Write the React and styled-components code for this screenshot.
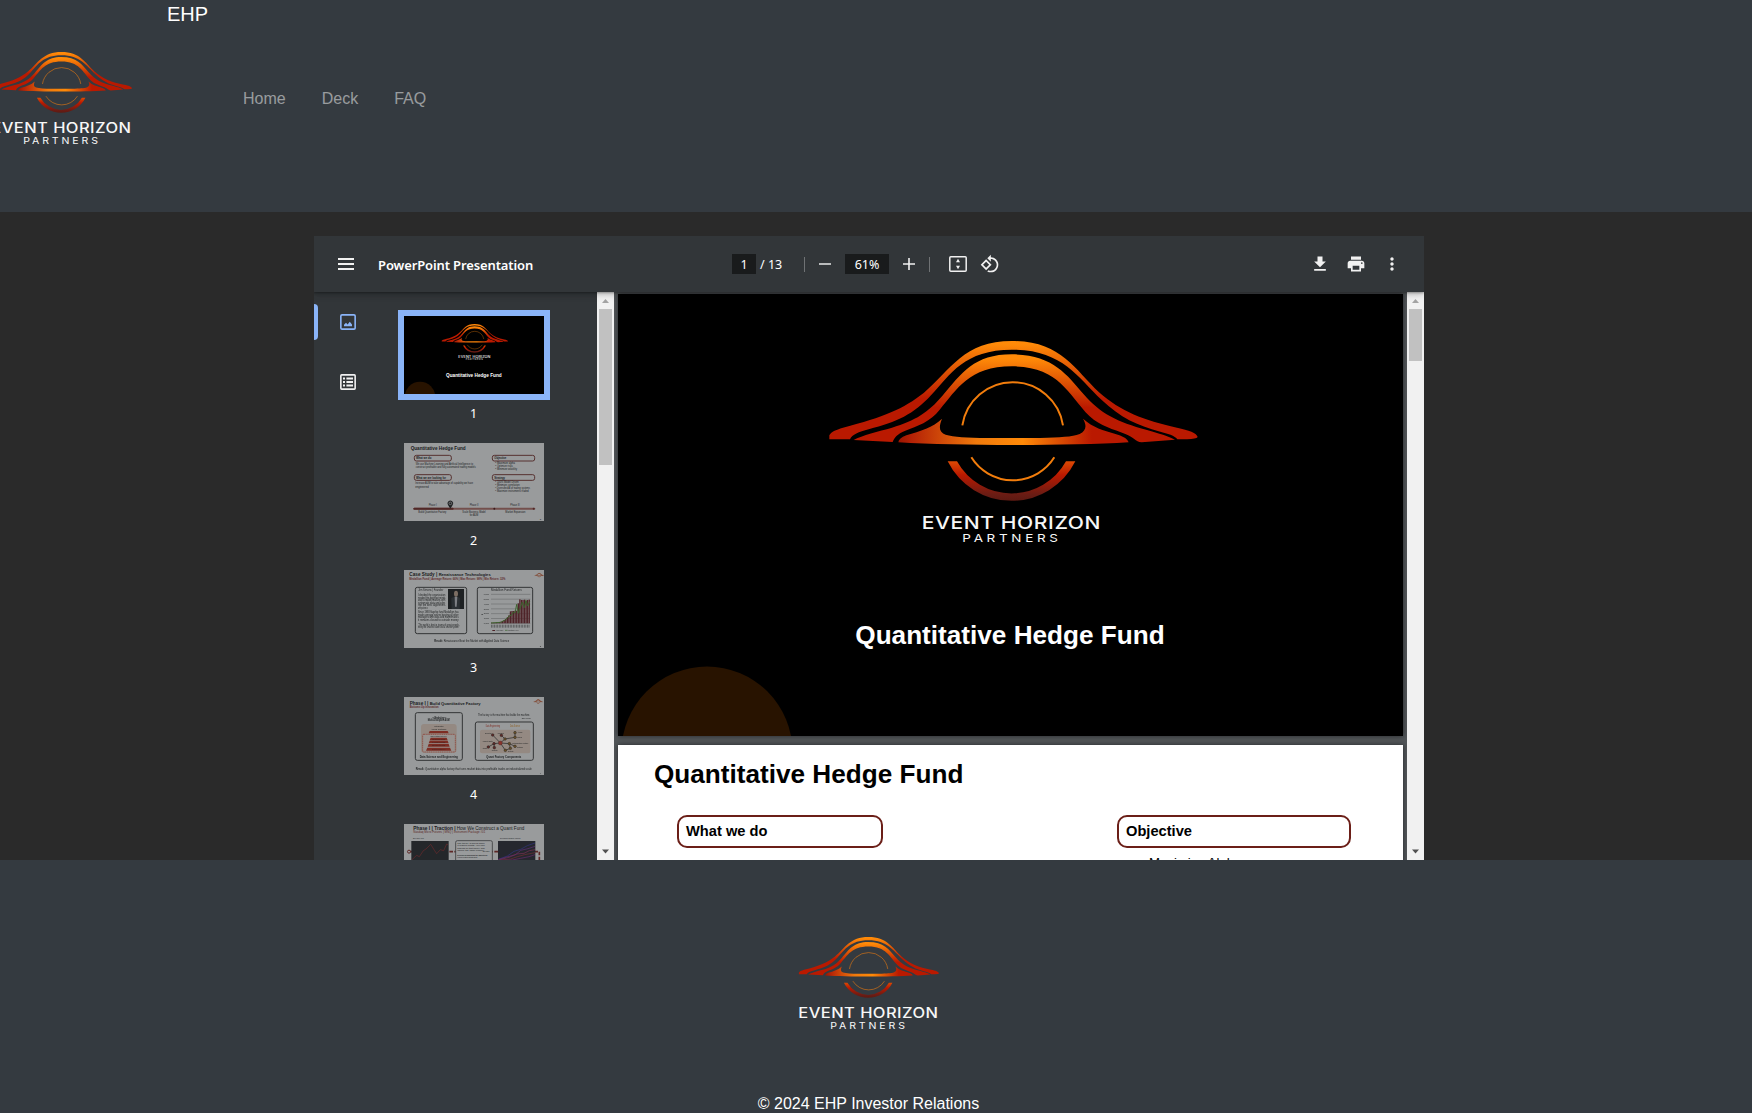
import React from "react";
import styled, { createGlobalStyle, css } from "styled-components";

const GlobalStyle = createGlobalStyle`
  * { box-sizing: border-box; }
  html, body { margin: 0; height: 100%; overflow: hidden; }
  body {
    background: #2a2a2a;
    color: #fff;
    font: 16px/24px "Liberation Sans", Arial, sans-serif;
  }
`;

const Page = styled.div`
  display: flex;
  flex-direction: column;
  height: 1113px;
  overflow: hidden;
`;

/* ---------- site header ---------- */

const Header = styled.header`
  display: flex;
  height: 212px;
  flex: none;
  background: #343a40;
`;

const HeaderLogo = styled.div`
  width: 167px;
  padding-top: 51px;
  overflow: hidden;
  svg { margin-left: -9px; }
`;

const Brand = styled.a`
  width: 76px;
  font-size: 20px;
  line-height: 28px;
`;

const Nav = styled.nav`
  display: flex;
  align-items: flex-start;
  gap: 36px;
  padding-top: 87px;
`;

const NavLink = styled.a`
  color: rgba(255, 255, 255, 0.5);
`;

/* ---------- viewer ---------- */

const Main = styled.main`
  height: 648px;
  flex: none;
  width: 1738px;
  padding-top: 24px;
  display: flex;
  justify-content: center;
`;

const Viewer = styled.section`
  width: 1110px;
  display: flex;
  flex-direction: column;
  overflow: hidden;
  font-family: "Noto Sans", "Open Sans", sans-serif;
`;

const Toolbar = styled.div`
  position: relative;
  z-index: 2;
  height: 56px;
  flex: none;
  display: grid;
  grid-template-columns: 418px 1fr 121px;
  align-items: center;
  background: #323639;
  box-shadow: 0 -2px 8px rgba(0, 0, 0, 0.09), 0 4px 8px rgba(0, 0, 0, 0.06),
    0 1px 2px rgba(0, 0, 0, 0.3), 0 2px 6px rgba(0, 0, 0, 0.15);
  color: #f1f1f1;
`;

const ToolStart = styled.div`
  display: flex;
  align-items: center;
  padding-left: 24px;
  gap: 24px;
  svg { display: block; }
`;

const DocTitle = styled.span`
  font-size: 13px;
  font-weight: 600;
  line-height: 20px;
  letter-spacing: -0.12px;
  padding-top: 1px;
  white-space: nowrap;
  color: #fff;
`;

const ToolCenter = styled.div`
  display: flex;
  align-items: center;
  font-size: 13px;
  line-height: 20px;
  svg { display: block; }
`;

const Field = styled.span`
  width: ${(p) => p.$w}px;
  height: 20px;
  background: #191b1c;
  color: #fff;
  font-size: 12.5px;
  line-height: 21px;
  text-align: center;
`;

const PageTotal = styled.span`
  width: 48px;
  padding: 1px 0 0 4px;
  font-size: 12.5px;
  color: #fff;
`;

const Divider = styled.span`
  width: 1px;
  height: 15px;
  background: #6f7274;
`;

const IconCell = styled.span`
  flex: none;
  width: ${(p) => p.$w}px;
  display: flex;
  justify-content: center;
  color: ${(p) => p.$color || "#f1f1f1"};
  svg { flex: none; }
`;

const ToolEnd = styled.div`
  display: flex;
  svg { display: block; }
`;

const ViewerBody = styled.div`
  flex: 1;
  min-height: 0;
  display: flex;
  overflow: hidden;
`;

const Sidebar = styled.aside`
  width: 283px;
  display: flex;
  background: #323639;
`;

const ModeTabs = styled.div`
  width: 68px;
  padding-top: 12px;
  display: flex;
  flex-direction: column;
  gap: 24px;
`;

const ModeTab = styled.div`
  height: 36px;
  display: flex;
  align-items: center;
  gap: 22px;
  color: #f1f1f1;
  &::before {
    content: "";
    width: 4px;
    height: 100%;
    border-radius: 0 4px 4px 0;
  }
  ${(p) =>
    p.$active &&
    css`
      color: #8ab4f8;
      &::before { background: #8ab4f8; }
    `}
  svg { display: block; }
`;

const Thumbs = styled.div`
  flex: 1;
  padding: 24px 0 0 22px;
  overflow: hidden;
`;

const Thumb = styled.figure`
  margin: 0;
  width: 140px;
  height: 127px;
  display: flex;
  flex-direction: column;
`;

const ThumbFrame = styled.div`
  height: 78px;
  box-shadow: ${(p) => (p.$selected ? "0 0 0 6px #8ab4f8" : "none")};
  svg {
    display: block;
    opacity: ${(p) => (p.$selected ? 1 : 0.5)};
  }
`;

const ThumbLabel = styled.figcaption`
  padding: 10px 1px 0 0;
  text-align: center;
  font-size: 12.5px;
  line-height: 20px;
  color: #fff;
`;

const ScrollTrack = styled.div`
  width: 17px;
  flex: none;
  background: #f1f1f1;
  display: flex;
  flex-direction: column;
  justify-content: space-between;
`;

const ScrollThumb = styled.div`
  width: 13px;
  height: ${(p) => p.$h}px;
  margin: 0 2px auto;
  background: #c1c1c1;
`;

const Pages = styled.div`
  flex: 1;
  padding: 2px 4px 0;
  background: #525659;
  overflow: hidden;
  display: flex;
  flex-direction: column;
  gap: 9px;
`;

const Slide = styled.article`
  width: 785px;
  height: 442px;
  flex: none;
  box-shadow: 0 0 5px rgba(0, 0, 0, 0.55);
  font-family: "Liberation Sans", Arial, sans-serif;
`;

const CoverSlide = styled(Slide)`
  position: relative;
  background: #000;
  display: flex;
  flex-direction: column;
  align-items: center;
  padding-top: 45px;
`;

const CoverLogo = styled.svg`
  display: block;
  margin-left: 4px;
`;

const CoverTitle = styled.h1`
  margin: 71px 1px 0 0;
  font-size: 26.15px;
  line-height: 36px;
  font-weight: 700;
  white-space: nowrap;
`;

const Planet = styled.svg`
  position: absolute;
  left: 0;
  bottom: 0;
`;

const OverviewSlide = styled(Slide)`
  background: #fff;
  color: #000;
  padding: 11px 52px 0 36px;
`;

const SlideTitle = styled.h2`
  margin: 0;
  font-size: 26.15px;
  line-height: 36px;
  font-weight: 700;
`;

const Columns = styled.div`
  display: flex;
  justify-content: space-between;
  padding: 23px 0 0 23px;
`;

const Column = styled.div`
  width: ${(p) => p.$w}px;
`;

const Heading = styled.h3`
  margin: 0;
  height: 33px;
  padding: 0 7px;
  border: 2px solid #6b1f18;
  border-radius: 10px;
  font-size: 14.67px;
  line-height: 29px;
  font-weight: 700;
`;

const Points = styled.ul`
  margin: 7px 0 0;
  padding: 0 0 0 32px;
  list-style: none;
  font-size: 13.2px;
  line-height: 15px;
`;

/* ---------- footer ---------- */

const Footer = styled.footer`
  flex: 1;
  display: flex;
  flex-direction: column;
  align-items: center;
  justify-content: space-between;
  padding: 76px 15px 0 0;
  background: #343a40;
  svg { display: block; }
`;

const Copyright = styled.p`
  margin: 0;
  height: 21px;
`;

/* ---------- drawings ---------- */

const MARK = {
  outer:
    "M87 357V345C92 334 106 329 128 322C250 291 310 265 370 218C452 148 490 62 635 62C782 62 822 146 896 216C962 274 1030 300 1130 322C1165 329 1190 338 1192 350Q1188 356 1160 357H1131C1125 346 1100 339 1080 334C1010 316 960 292 905 240C830 168 785 88 635 88C492 88 450 162 392 225C340 282 290 305 205 327C175 335 155 343 149 357Z",
  inner:
    "M160 359C185 345 235 333 275 322C345 302 385 275 425 228C485 158 520 102 635 102C755 102 800 162 850 222C900 280 950 305 1040 329C1075 339 1105 348 1124 358L1024 366C1005 364 1000 350 975 341C940 327 900 318 868 288C800 218 775 138 635 138C505 138 470 208 418 268C390 304 350 318 315 331C290 341 282 352 277 365Z",
  core:
    "M294 366Q295 354 318 345C360 332 398 322 425 295C414 322 417 336 436 343C460 350 500 352 560 353H720C780 351 815 350 838 341C858 331 860 316 848 295C878 322 910 330 943 340Q980 350 985 366C800 377 480 377 294 366Z",
  crescent: "M442 423A214 214 0 0 0 825 423H797A187 187 0 0 1 470 423Z",
};

function Mark({ id, ring = 6 }) {
  return (
    <>
      <defs>
        <linearGradient id={id + "a"} gradientUnits="userSpaceOnUse" x1="0" y1="72" x2="0" y2="235">
          <stop offset="0" stopColor="#ff8a08" />
          <stop offset="1" stopColor="#ba1900" />
        </linearGradient>
        <linearGradient id={id + "b"} gradientUnits="userSpaceOnUse" x1="0" y1="115" x2="0" y2="262">
          <stop offset="0" stopColor="#ff8a08" />
          <stop offset="1" stopColor="#ba1900" />
        </linearGradient>
        <linearGradient id={id + "c"} gradientUnits="userSpaceOnUse" x1="294" y1="0" x2="985" y2="0">
          <stop offset="0" stopColor="#9c1400" />
          <stop offset="0.06" stopColor="#b52206" />
          <stop offset="0.34" stopColor="#f07a0c" />
          <stop offset="0.54" stopColor="#ff8a08" />
          <stop offset="0.84" stopColor="#ba1900" />
          <stop offset="1" stopColor="#ba1900" />
        </linearGradient>
        <linearGradient id={id + "d"} gradientUnits="userSpaceOnUse" x1="0" y1="423" x2="0" y2="540">
          <stop offset="0" stopColor="#dc4a04" />
          <stop offset="0.35" stopColor="#ba1900" />
          <stop offset="0.85" stopColor="#6a1c14" />
          <stop offset="1" stopColor="#5e1a12" />
        </linearGradient>
      </defs>
      <path d={MARK.outer} fill={`url(#${id}a)`} />
      <path d={MARK.inner} fill={`url(#${id}b)`} />
      <path d={MARK.core} fill={`url(#${id}c)`} />
      <path d={MARK.crescent} fill={`url(#${id}d)`} />
      <g fill="none" stroke="#f27d0c" strokeWidth={ring}>
        <path d="M486 315A152.8 152.8 0 0 1 788 315" />
        <path d="M513 411A147 147 0 0 0 762 411" />
      </g>
    </>
  );
}

const Wordmark = styled.text`
  font-family: Inter, sans-serif;
  font-weight: ${(p) => p.$weight};
  font-size: ${(p) => p.$size}px;
  letter-spacing: ${(p) => p.$gap}px;
  fill: #f7f7f7;
`;

function StackedLogo({ id }) {
  return (
    <svg width="142" height="95" viewBox="80 55 1120 749">
      <Mark id={id} ring={4.5} />
      <Wordmark $weight={500} $size={111} $gap={3} x="82" y="699" textLength="1106" lengthAdjust="spacingAndGlyphs">
        EVENT HORIZON
      </Wordmark>
      <Wordmark $weight={400} $size={74} $gap={20} x="334" y="790" textLength="612" lengthAdjust="spacingAndGlyphs">
        PARTNERS
      </Wordmark>
    </svg>
  );
}

function WideLogoShapes({ id }) {
  return (
    <>
      <Mark id={id} />
      <Wordmark $weight={500} $size={52} $gap={1.5} x="364" y="625" textLength="538" lengthAdjust="spacingAndGlyphs">
        EVENT HORIZON
      </Wordmark>
      <Wordmark $weight={400} $size={33} $gap={9} x="486" y="666" textLength="298" lengthAdjust="spacingAndGlyphs">
        PARTNERS
      </Wordmark>
    </>
  );
}

const Drawing = styled.svg`
  font-family: "Liberation Sans", Arial, sans-serif;
`;

function ThumbSvg({ bg = "#fff", children }) {
  return (
    <Drawing width="140" height="78" viewBox="0 0 420 234">
      <rect width="420" height="234" fill={bg} />
      {children}
    </Drawing>
  );
}

function Line({ x, y, w, s = 8, b, c = "#000", children }) {
  const size = s < 9 ? s * 1.2 : s;
  return (
    <text x={x} y={y} fontSize={size} fontWeight={b ? 700 : 400} fill={c} textLength={w} lengthAdjust="spacingAndGlyphs">
      {children}
    </text>
  );
}

function Box({ x, y, w, h, c = "#222", r = 6, sw = 2.8 }) {
  return <rect x={x} y={y} width={w} height={h} rx={r} fill="none" stroke={c} strokeWidth={sw} />;
}

function MiniMark({ x, y }) {
  return (
    <g transform={`translate(${x} ${y}) scale(0.0245)`} fill="#c8400a" stroke="#c8400a" strokeWidth="22">
      <path d={MARK.outer} />
      <path d={MARK.inner} />
      <path d={MARK.core} />
      <path d={MARK.crescent} />
    </g>
  );
}

function CoverThumb() {
  return (
    <ThumbSvg bg="#000">
      <clipPath id="cover-clip"><rect width="420" height="234" /></clipPath>
      <circle cx="48" cy="243" r="46" fill="#281300" clipPath="url(#cover-clip)" />
      <g transform="translate(97.5 12.5) scale(0.18)"><WideLogoShapes id="t" /></g>
      <Line x={126} y={184} w={167} s={14} b c="#fff">Quantitative Hedge Fund</Line>
    </ThumbSvg>
  );
}

function OverviewThumb() {
  const red = "#701c16";
  return (
    <ThumbSvg>
      <Line x={20} y={20} w={165} s={14} b>Quantitative Hedge Fund</Line>
      <Box x={31} y={37} w={111} h={17} c={red} />
      <Line x={36} y={49} w={46} b>What we do</Line>
      <Box x={265} y={37} w={127} h={17} c={red} />
      <Line x={271} y={49} w={36} b>Objective</Line>
      <Line x={35} y={67} w={172} s={7}>We use Machine Learning and Artificial Intelligence to</Line>
      <Line x={35} y={76} w={180} s={7}>construct profitable and fully automated trading models</Line>
      <Line x={274} y={64} w={59} s={7}>•  Maximize alpha</Line>
      <Line x={274} y={72} w={52} s={7}>•  Optimize risks</Line>
      <Line x={274} y={80} w={65} s={7}>•  Minimize volatility</Line>
      <Box x={31} y={95} w={111} h={17} c={red} />
      <Line x={36} y={107} w={90} b>What we are looking for</Line>
      <Box x={265} y={95} w={127} h={17} c={red} />
      <Line x={271} y={107} w={32} b>Strategy</Line>
      <Line x={34} y={124} w={173} s={7}>Increase AUM to take advantage of capability we have</Line>
      <Line x={34} y={134} w={40} s={7}>engineered</Line>
      <Line x={274} y={121} w={70} s={7}>•  100% Model Driven</Line>
      <Line x={274} y={130} w={73} s={7}>•  Minimize correlation</Line>
      <Line x={274} y={139} w={104} s={7}>•  Diversified AI of trading systems</Line>
      <Line x={274} y={148} w={100} s={7}>•  Maximize instruments traded</Line>
      <Line x={74} y={190} w={24} s={7}>Phase I</Line>
      <Line x={197} y={190} w={26} s={7}>Phase II</Line>
      <Line x={319} y={190} w={28} s={7}>Phase III</Line>
      <path d="M31 197H391" stroke="#b56a62" strokeWidth="6" strokeLinecap="round" />
      <path d="M31 197H146" stroke="#701c16" strokeWidth="6" strokeLinecap="round" />
      <circle cx="271" cy="197" r="3" fill="#400" />
      <circle cx="389" cy="197" r="3" fill="#701c16" />
      <path d="M139 197L132 186A8.5 8.5 0 1 1 146 186Z" fill="#111" />
      <circle cx="139" cy="181" r="4" fill="none" stroke="#fff" strokeWidth="1.8" />
      <Line x={43} y={210} w={84} s={7}>Build Quantitative Factory</Line>
      <Line x={175} y={210} w={70} s={7}>Scale Business Model</Line>
      <Line x={197} y={218} w={26} s={7}>for AUM</Line>
      <Line x={304} y={210} w={60} s={7}>Market Expansion</Line>
      <Line x={407} y={230} w={4} s={6}>2</Line>
    </ThumbSvg>
  );
}

const QUOTE = [
  "I decided the organisation", "needed the brightest minds", "and to model markets with", "systematic data and rules",
  "run the best algorithms", "with patience.",
];
const NOTE = ["Since 1988 flagship fund Medallion has", "made average returns beating all other", "managers with data and mathematics", "it remains closed to outside money"];
const YEARS = [2, 2, 2, 3, 3, 4, 5, 7, 10, 13, 18, 24, 36, 37, 37, 38, 38, 60, 72, 70, 70, 71, 68, 70, 71];

function CaseThumb() {
  return (
    <ThumbSvg>
      <Line x={16} y={19} w={84} s={13.5} b>Case Study |</Line>
      <Line x={104} y={19} w={156} s={12} b>Renaissance Technologies</Line>
      <Line x={16} y={31} w={288} s={7.5} b c="#8a2018">Medallion Fund | Average Return: 66% | Max Return: 98% | Min Return: 32%</Line>
      <MiniMark x={390} y={8} />
      <Box x={34} y={52} w={154} h={139} />
      <Line x={43} y={64} w={75} s={8}>Jim Simons | Founder</Line>
      {QUOTE.map((q, i) => <Line key={q} x={42} y={78 + i * 7.6} w={i === 5 ? 30 : 82} s={6.5}>{q}</Line>)}
      {NOTE.map((q, i) => <Line key={q} x={42} y={129 + i * 7.6} w={122} s={6.5}>{q}</Line>)}
      <Line x={42} y={167} w={124} s={6.5}>“The world is best in teams of great people,</Line>
      <Line x={42} y={175} w={124} s={6.5}>hiring the smartest talent and a shared system”</Line>
      <rect x="132" y="57" width="48" height="60" fill="#0a0d0f" />
      <path d="M143 117L142 84Q155 75 168 84L167 117Z" fill="#252a30" />
      <path d="M152 80H160L158 110H153Z" fill="#c9c9d0" />
      <ellipse cx="156" cy="71" rx="6" ry="9" fill="#c4a48c" />
      <Box x={220} y={52} w={166} h={139} />
      <Line x={261} y={62} w={92} s={8}>Medallion Fund Returns</Line>
      {[0, 1, 2, 3, 4, 5, 6].map((i) => (
        <g key={i}>
          <path d={`M261 ${73 + i * 14.5}H379`} stroke="#777" strokeWidth="1.3" />
          <Line x={239} y={75 + i * 14.5} w={16} s={6}>{60 - i * 10 + ",000"}</Line>
        </g>
      ))}
      {YEARS.map((h, i) => <rect key={i} x={261 + i * 4.7} y={160 - h} width="4" height={h} fill="#6b1018" />)}
      <path d="M261 159L290 157L305 149L314 139L323 135L328 126L333 129L338 103L343 130L349 113L355 96L361 113L366 91L371 108L377 95" fill="none" stroke="#42911e" strokeWidth="2.8" />
      <Line x={232} y={134} w={6} s={6}>$</Line>
      {YEARS.map((h, i) => <rect key={i} x={261 + i * 4.7} y="164" width="2.4" height="9" fill="#777" />)}
      <rect x="265" y="180" width="8" height="3" fill="#6b1018" />
      <Line x={275} y={184} w={23} s={6}>AUM ($M)</Line>
      <path d="M303 181H311" stroke="#42911e" strokeWidth="2" />
      <Line x={313} y={184} w={31} s={6}>Return (%)</Line>
      <Line x={91} y={216} w={26} s={7.5} b>Result:</Line>
      <Line x={119} y={216} w={197} s={7.5}>Renaissance Beat the Market with Applied Data Science</Line>
      <Line x={407} y={230} w={4} s={6}>3</Line>
    </ThumbSvg>
  );
}

const NODES = [[266, 114], [292, 115], [303, 126], [333, 107], [333, 121], [270, 140], [253, 150], [271, 152], [316, 140], [333, 148], [319, 154], [304, 160]];

function FactoryThumb() {
  return (
    <ThumbSvg>
      <Line x={17} y={24} w={56} s={13.5} b>Phase I |</Line>
      <Line x={77} y={24} w={153} s={12} b>Build Quantitative Factory</Line>
      <Line x={17} y={34} w={87} s={7.5} b c="#8a2018">Bottoms Up Innovation</Line>
      <MiniMark x={387} y={6} />
      <Box x={34} y={47} w={141} h={143} />
      <Line x={85} y={65} w={42} s={7} b>—Marketing—</Line>
      <Line x={71} y={73} w={66} s={7} b>Multi-Discipline AUM</Line>
      <rect x="51" y="81" width="107" height="86" rx="9" fill="#f6dccc" />
      <rect x="56" y="112" width="98" height="53" rx="3" fill="#fff1e8" stroke="#e5341a" strokeWidth="2" strokeDasharray="4 1.5" />
      <Line x={91} y={90} w={28} s={6}>Optimization</Line>
      <Line x={81} y={98} w={46} s={6}>Alpha Portfolio</Line>
      <path d="M77 102H131L134 109H74ZM80 122H128L131 130H77ZM77 131H131L134 139H74ZM74 141H134L137 149H71ZM70 152H138L142 161H66Z" fill="#c8240f" />
      <Line x={79} y={119} w={49} s={6}>Innovation Driven</Line>
      {["Signals", "Modeling", "Backtests", "Data Platform"].map((s, i) => (
        <Line key={s} x={84} y={128 + i * 10.2} w={40} s={6} c="#4a0c04">{s}</Line>
      ))}
      <Line x={47} y={184} w={115} s={7.5} b>Data Science and Engineering</Line>
      <Line x={222} y={57} w={156} s={7}>The factory is the machine that builds the machine.</Line>
      <Line x={353} y={65} w={27} s={6}>Elon Musk</Line>
      <Box x={214} y={75} w={174} h={115} />
      <Line x={245} y={91} w={43} s={7} c="#c8240f">Data Engineering</Line>
      <Line x={318} y={91} w={30} s={7} c="#e88a10">Data Science</Line>
      <rect x="228" y="98" width="151" height="71" rx="6" fill="#f6dccc" />
      <path
        d="M266 114L289 138M292 115L303 126L333 121V107M289 138L303 126M289 138L270 140L253 150M270 140L271 152M289 138L316 140L333 148M316 140L319 154M289 138L304 160L319 154"
        fill="none"
        stroke="#222"
        strokeWidth="2.2"
      />
      {NODES.map(([x, y], i) => <circle key={i} cx={x} cy={y} r={4} fill={x > 300 ? "#a36a18" : "#8a1c14"} stroke="#111" strokeWidth="1.3" />)}
      <circle cx="289" cy="138" r="6" fill="#e03020" stroke="#511" />
      {[[243, 111, "Execution", 20], [281, 110, "Research", 18], [341, 108, "Alpha", 14], [340, 123, "Signal", 14], [236, 136, "Market Data", 30], [325, 140, "Optimization System", 48], [236, 157, "Storage", 14], [263, 162, "Compute", 18], [339, 153, "Portfolio", 18], [312, 164, "Reports", 16]].map(([x, y, s, w]) => (
        <Line key={s} x={x} y={y} w={w} s={5}>{s}</Line>
      ))}
      <Line x={247} y={184} w={105} s={7.5} b>Quant Factory Components</Line>
      <Line x={35} y={218} w={26} s={7.5} b>Result:</Line>
      <Line x={63} y={218} w={320} s={7.5}>Quantitative alpha factory that turns market data into profitable trades on industrialized scale</Line>
      <Line x={407} y={230} w={4} s={6}>4</Line>
    </ThumbSvg>
  );
}

function TractionThumb() {
  const red = "#8a1c14";
  return (
    <ThumbSvg>
      <Line x={28} y={17} w={127} s={14} b>Phase I | Traction |</Line>
      <Line x={158} y={17} w={203} s={14}>How We Construct a Quant Fund</Line>
      <Line x={28} y={28} w={216} s={7.5} c={red}>Nasdaq Micro Futures | MNQ | Instrument Package #01</Line>
      <Line x={27} y={45} w={32} s={5}>Buy and Hold</Line>
      <Line x={288} y={45} w={61} s={5}>Diversified Strategy Models</Line>
      <path d="M16 83H406V112" fill="none" stroke={red} strokeWidth="5" strokeDasharray="11 4" />
      <circle cx="15" cy="83" r="4.5" fill="#fff" stroke={red} strokeWidth="3" />
      <rect x="22" y="51" width="112" height="80" fill="#17191c" />
      <path d="M23 108L38 94L46 98L58 80L66 75L80 61L92 80L98 89L109 77L119 80L128 60L132 62" fill="none" stroke="#b52020" strokeWidth="1.8" />
      <rect x="155" y="50" width="110" height="90" rx="5" fill="#fff" stroke="#444" strokeWidth="2.5" />
      {["The theory is sound when", "it makes profits, you can", "discuss all that theory and", "ignore the edge entirely."].map((s, i) => (
        <Line key={s} x={160} y={60 + i * 7} w={82} s={6}>{s}</Line>
      ))}
      <Line x={233} y={85} w={24} s={5}>- Big trader</Line>
      <Line x={160} y={96} w={90} s={6} b>Diversify all appearing the markets on</Line>
      <Line x={160} y={103} w={60} s={6}>uncorrelated strategies</Line>
      <rect x="282" y="51" width="112" height="80" fill="#191a24" />
      <g fill="none" strokeWidth="2">
        <path d="M283 106L310 96L330 82L350 76L370 65L393 57" stroke="#3333c8" />
        <path d="M283 107L308 99L335 92L350 79L372 74L393 67" stroke="#8c28b4" />
        <path d="M283 108L315 100L338 90L360 88L376 80L393 77" stroke="#c82870" />
        <path d="M283 109L320 105L340 98L362 92L393 86" stroke="#b42830" />
        <path d="M283 109L325 108L350 103L375 98L393 92" stroke="#a020a0" />
      </g>
    </ThumbSvg>
  );
}

function Glyph({ size = 20, d }) {
  return (
    <svg width={size} height={size} viewBox="0 0 24 24" fill="currentColor">
      <path d={d} />
    </svg>
  );
}

function Scrollbar({ thumb }) {
  return (
    <ScrollTrack>
      <svg width="17" height="17"><path d="M5 11L8.5 7L12 11Z" fill="#a3a3a3" /></svg>
      <ScrollThumb $h={thumb} />
      <svg width="17" height="17"><path d="M5 6.5L8.5 10.5L12 6.5Z" fill="#505050" /></svg>
    </ScrollTrack>
  );
}

const THUMBS = [CoverThumb, OverviewThumb, CaseThumb, FactoryThumb, TractionThumb];

export default function App() {
  return (
    <Page>
      <GlobalStyle />
      <Header>
        <HeaderLogo><StackedLogo id="h" /></HeaderLogo>
        <Brand>EHP</Brand>
        <Nav>
          <NavLink>Home</NavLink>
          <NavLink>Deck</NavLink>
          <NavLink>FAQ</NavLink>
        </Nav>
      </Header>

      <Main>
        <Viewer>
          <Toolbar>
            <ToolStart>
              <svg width="16" height="12" fill="#f1f1f1">
                <path d="M0 0H16V2H0ZM0 5H16V7H0ZM0 10H16V12H0Z" />
              </svg>
              <DocTitle>PowerPoint Presentation</DocTitle>
            </ToolStart>
            <ToolCenter>
              <Field $w={24}>1</Field>
              <PageTotal>/ 13</PageTotal>
              <Divider />
              <IconCell $w={40} $color="#b9bbbc">
                <svg width="12" height="2" fill="currentColor"><rect width="12" height="2" /></svg>
              </IconCell>
              <Field $w={44}>61%</Field>
              <IconCell $w={40}>
                <svg width="12" height="12" fill="currentColor"><path d="M5.2 0H6.8V5.2H12V6.8H6.8V12H5.2V6.8H0V5.2H5.2Z" /></svg>
              </IconCell>
              <Divider />
              <IconCell $w={56}>
                <svg width="18" height="16" viewBox="0 0 18 16" fill="currentColor">
                  <rect x="0.8" y="0.8" width="16.4" height="14.4" rx="1" fill="none" stroke="currentColor" strokeWidth="1.5" />
                  <path d="M9 2.8L11 6.2H7ZM9 13.2L7 9.8H11Z" />
                </svg>
              </IconCell>
              <IconCell $w={8}>
                <Glyph size={20} d="M7.34 6.41L.86 12.9l6.49 6.48 6.49-6.48-6.5-6.49zM3.69 12.9l3.66-3.66L11 12.9l-3.66 3.66-3.65-3.66zm15.67-6.26C17.61 4.88 15.3 4 13 4V.76L8.76 5 13 9.24V6c1.79 0 3.58.68 4.95 2.05 2.73 2.73 2.73 7.17 0 9.9C16.58 19.32 14.79 20 13 20c-.97 0-1.94-.21-2.84-.61l-1.49 1.49C10.02 21.62 11.51 22 13 22c2.3 0 4.61-.88 6.36-2.64 3.52-3.51 3.52-9.21 0-12.72z" />
              </IconCell>
            </ToolCenter>
            <ToolEnd>
              <IconCell $w={34}><Glyph d="M19 9h-4V3H9v6H5l7 7 7-7zM5 18v2h14v-2H5z" /></IconCell>
              <IconCell $w={38}><Glyph d="M19 8H5c-1.66 0-3 1.34-3 3v6h4v4h12v-4h4v-6c0-1.66-1.34-3-3-3zm-3 11H8v-5h8v5zm3-7c-.55 0-1-.45-1-1s.45-1 1-1 1 .45 1 1-.45 1-1 1zm-1-9H6v4h12V3z" /></IconCell>
              <IconCell $w={34}><Glyph d="M12 8c1.1 0 2-.9 2-2s-.9-2-2-2-2 .9-2 2 .9 2 2 2zm0 2c-1.1 0-2 .9-2 2s.9 2 2 2 2-.9 2-2-.9-2-2-2zm0 6c-1.1 0-2 .9-2 2s.9 2 2 2 2-.9 2-2-.9-2-2-2z" /></IconCell>
            </ToolEnd>
          </Toolbar>

          <ViewerBody>
            <Sidebar>
              <ModeTabs>
                <ModeTab $active>
                  <svg width="16" height="16" fill="currentColor">
                    <rect x="0.85" y="0.85" width="14.3" height="14.3" rx="1.2" fill="none" stroke="currentColor" strokeWidth="1.6" />
                    <path d="M4 12.2V10.8L6 8.8L7.6 10.4L9.8 7.8L12 10.4V12.2Z" />
                  </svg>
                </ModeTab>
                <ModeTab>
                  <svg width="16" height="16" fill="currentColor">
                    <rect x="0.85" y="0.85" width="14.3" height="14.3" rx="0.8" fill="none" stroke="currentColor" strokeWidth="1.6" />
                    <path d="M3 3.6H5V5.4H3ZM6.4 3.6H13V5.4H6.4ZM3 7.1H5V8.9H3ZM6.4 7.1H13V8.9H6.4ZM3 10.6H5V12.4H3ZM6.4 10.6H13V12.4H6.4Z" />
                  </svg>
                </ModeTab>
              </ModeTabs>
              <Thumbs>
                {THUMBS.map((Art, i) => (
                  <Thumb key={i}>
                    <ThumbFrame $selected={i === 0}><Art /></ThumbFrame>
                    <ThumbLabel>{i + 1}</ThumbLabel>
                  </Thumb>
                ))}
              </Thumbs>
            </Sidebar>
            <Scrollbar thumb={156} />
            <Pages>
              <CoverSlide>
                <CoverLogo width="373" height="207" viewBox="77 56 1119 621">
                  <WideLogoShapes id="m" />
                </CoverLogo>
                <CoverTitle>Quantitative Hedge Fund</CoverTitle>
                <Planet width="180" height="70">
                  <circle cx="89" cy="86" r="85.5" fill="#281300" />
                </Planet>
              </CoverSlide>
              <OverviewSlide>
                <SlideTitle>Quantitative Hedge Fund</SlideTitle>
                <Columns>
                  <Column $w={206}><Heading>What we do</Heading></Column>
                  <Column $w={234}>
                    <Heading>Objective</Heading>
                    <Points><li>Maximize Alpha</li></Points>
                  </Column>
                </Columns>
              </OverviewSlide>
            </Pages>
            <Scrollbar thumb={52} />
          </ViewerBody>
        </Viewer>
      </Main>

      <Footer>
        <StackedLogo id="f" />
        <Copyright>© 2024 EHP Investor Relations</Copyright>
      </Footer>
    </Page>
  );
}
